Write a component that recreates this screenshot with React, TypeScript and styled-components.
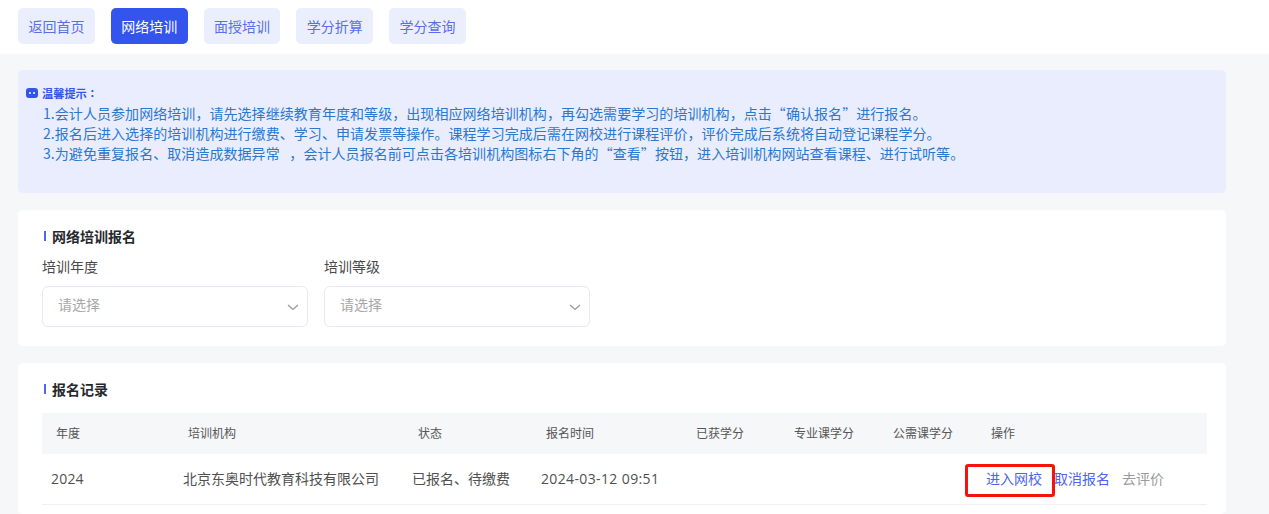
import React from "react";
import styled, { createGlobalStyle } from "styled-components";

const Global = createGlobalStyle`
  html, body { margin: 0; padding: 0; background: #f6f7f9; }
  body { font-family: "Noto Sans CJK SC", "Noto Sans", sans-serif; overflow: hidden; }
  * { box-sizing: border-box; }
`;

const Page = styled.div`
  width: 1269px;
  height: 514px;
  overflow: hidden;
`;

const TopBar = styled.div`
  height: 54px;
  background: #fff;
  padding: 8px 18px 0;
  display: flex;
  gap: 16px;
`;

const Tab = styled.div<{ $active?: boolean }>`
  width: 76.8px;
  height: 36px;
  border-radius: 5px;
  display: flex;
  align-items: center;
  justify-content: center;
  font-size: 14px;
  color: ${(p) => (p.$active ? "#fff" : "#5a6ee8")};
  background: ${(p) => (p.$active ? "#3355ee" : "#ebeefc")};
`;

const Main = styled.div`
  width: 1208px;
  margin-left: 18px;
  padding-top: 16px;
  display: flex;
  flex-direction: column;
  gap: 17px;
`;

const Notice = styled.div`
  height: 123px;
  background: #e9edfd;
  border-radius: 5px;
  padding: 16px 8px 0;
`;

const NoticeTitle = styled.div`
  display: flex;
  align-items: center;
  gap: 4px;
  height: 14px;
  font-family: "Noto Sans CJK TC", sans-serif;
  font-size: 11.2px;
  font-weight: 700;
  color: #3355ee;
`;

const NoticeLine = styled.div`
  font-size: 14px;
  line-height: 20px;
  height: 20px;
  letter-spacing: 0.06px;
  color: #2b78d0;
  padding-left: 17px;
  white-space: nowrap;
`;

const NoticeBody = styled.div`
  margin-top: 3px;
`;

const Card = styled.div<{ $h: number }>`
  height: ${(p) => p.$h}px;
  background: #fff;
  border-radius: 5px;
  padding: 0 19px 0 24px;
`;

const SectionTitle = styled.div`
  display: flex;
  align-items: center;
  gap: 6px;
  padding-top: 17px;
  height: 35px;
  font-size: 14px;
  font-weight: 700;
  color: #26282e;
  line-height: 18px;
  &::before {
    content: "";
    width: 2px;
    height: 10px;
    margin-left: 2px;
    background: #4a68f0;
  }
`;

const Fields = styled.div`
  display: flex;
  gap: 16px;
  margin-top: 11px;
`;

const Field = styled.div`
  width: 266px;
`;

const Label = styled.div`
  font-size: 14px;
  line-height: 20px;
  height: 20px;
  color: #4a4a4a;
  margin-bottom: 10px;
`;

const Select = styled.div`
  height: 41px;
  border: 1px solid #e8e8f0;
  border-radius: 6px;
  display: flex;
  align-items: center;
  justify-content: space-between;
  padding: 0 7px 0 15px;
`;

const Placeholder = styled.span`
  font-size: 14px;
  color: #a8a8a8;
  margin-bottom: 5px;
`;

const Columns = "132px 230px 128px 150px 98px 99px 98px 1fr";

const HeadRow = styled.div`
  display: grid;
  grid-template-columns: ${Columns};
  height: 41px;
  align-items: center;
  background: #f6f7f9;
  margin-top: 15px;
  padding: 0 0 2px 14px;
  font-size: 12px;
  color: #555;
`;

const Row = styled.div`
  position: relative;
  display: flex;
  height: 51px;
  align-items: center;
  padding-bottom: 2px;
  border-bottom: 1px solid #eeeff2;
  font-size: 14px;
  color: #505050;
  white-space: nowrap;
`;

const Cell = styled.div<{ $w: number }>`
  width: ${(p) => p.$w}px;
  flex: none;
`;

const YearCell = styled(Cell)`
  padding-left: 9px;
  font-family: "Open Sans", sans-serif;
  letter-spacing: 0.2px;
`;

const DateCell = styled(Cell)`
  font-family: "Open Sans", sans-serif;
  letter-spacing: 0.37px;
`;

const Actions = styled.div`
  margin-left: 326px;
  display: flex;
  font-size: 14px;
`;

const Link = styled.span<{ $muted?: boolean }>`
  color: ${(p) => (p.$muted ? "#9a9a9a" : "#4c64ee")};
  margin-right: ${(p) => (p.$muted ? 0 : 12)}px;
`;

const Highlight = styled.div`
  position: absolute;
  left: 923px;
  top: 10px;
  width: 90px;
  height: 33px;
  border: 3px solid #f5140c;
  border-radius: 3px;
`;

const Chevron = () => (
  <svg width="14" height="14" viewBox="0 0 14 14" fill="none">
    <path d="M2 5 7 9.5 12 5" stroke="#9a9a9a" strokeWidth="1.3" />
  </svg>
);

const TipIcon = () => (
  <svg width="12" height="12" viewBox="0 0 12 12">
    <rect x="0" y="1" width="12" height="10" rx="3" fill="#3355ee" />
    <circle cx="4" cy="6" r="1" fill="#fff" />
    <circle cx="8" cy="6" r="1" fill="#fff" />
  </svg>
);

export default function App() {
  return (
    <Page>
      <Global />
      <TopBar>
        <Tab>返回首页</Tab>
        <Tab $active>网络培训</Tab>
        <Tab>面授培训</Tab>
        <Tab>学分折算</Tab>
        <Tab>学分查询</Tab>
      </TopBar>
      <Main>
        <Notice>
          <NoticeTitle>
            <TipIcon />
            温馨提示：
          </NoticeTitle>
          <NoticeBody>
            <NoticeLine>1.会计人员参加网络培训，请先选择继续教育年度和等级，出现相应网络培训机构，再勾选需要学习的培训机构，点击“确认报名”进行报名。</NoticeLine>
            <NoticeLine>2.报名后进入选择的培训机构进行缴费、学习、申请发票等操作。课程学习完成后需在网校进行课程评价，评价完成后系统将自动登记课程学分。</NoticeLine>
            <NoticeLine>3.为避免重复报名、取消造成数据异常&nbsp;&nbsp;&nbsp;，会计人员报名前可点击各培训机构图标右下角的“查看”按钮，进入培训机构网站查看课程、进行试听等。</NoticeLine>
          </NoticeBody>
        </Notice>
        <Card $h={136}>
          <SectionTitle>网络培训报名</SectionTitle>
          <Fields>
            <Field>
              <Label>培训年度</Label>
              <Select>
                <Placeholder>请选择</Placeholder>
                <Chevron />
              </Select>
            </Field>
            <Field>
              <Label>培训等级</Label>
              <Select>
                <Placeholder>请选择</Placeholder>
                <Chevron />
              </Select>
            </Field>
          </Fields>
        </Card>
        <Card $h={151}>
          <SectionTitle>报名记录</SectionTitle>
          <HeadRow>
            <div>年度</div>
            <div>培训机构</div>
            <div>状态</div>
            <div>报名时间</div>
            <div>已获学分</div>
            <div>专业课学分</div>
            <div>公需课学分</div>
            <div>操作</div>
          </HeadRow>
          <Row>
            <YearCell $w={141}>2024</YearCell>
            <Cell $w={229}>北京东奥时代教育科技有限公司</Cell>
            <Cell $w={129}>已报名、待缴费</Cell>
            <DateCell $w={119}>2024-03-12 09:51</DateCell>
            <Actions>
              <Link>进入网校</Link>
              <Link>取消报名</Link>
              <Link $muted>去评价</Link>
            </Actions>
            <Highlight />
          </Row>
        </Card>
      </Main>
    </Page>
  );
}
